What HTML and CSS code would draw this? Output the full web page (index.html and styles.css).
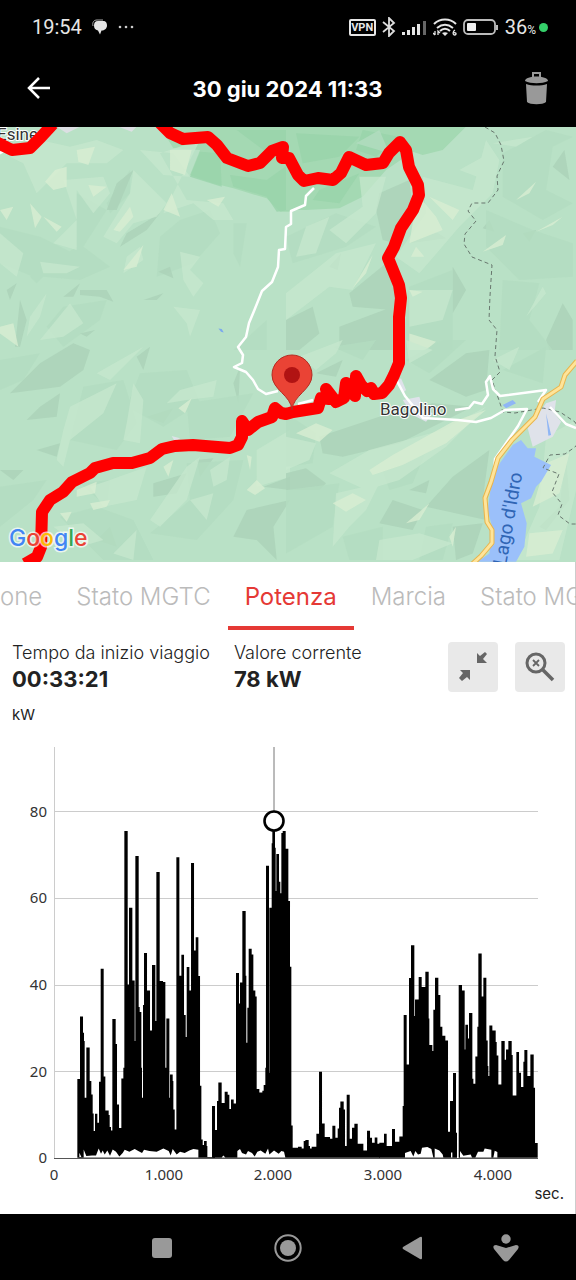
FILE: index.html
```html
<!DOCTYPE html>
<html lang="it">
<head>
    <meta charset="UTF-8">
    <meta name="viewport" content="width=device-width, initial-scale=1">
    <title>30 giu 2024 11:33</title>
    <link rel="stylesheet" href="styles.css">
</head>
<body>
    <div class="status">
        <span class="clock">19:54</span>
        <svg class="chat" width="16" height="16" viewBox="0 0 16 16"><path d="M6 2h5c3 0 4 2 4 4.500s-2 5-5 5H9.500l-1.500 4-2-4C3 11 2 9 2 6.500 2 4 3 2 6 2z" fill="#e6e6e6"/><path d="M1 7C0 3 2 1 5 1h6" stroke="#aaa" fill="none"/></svg>
        <svg width="18" height="4" viewBox="0 0 18 4" fill="#ccc"><circle cx="3" cy="2" r="1.3"/><circle cx="9" cy="2" r="1.3"/><circle cx="15" cy="2" r="1.3"/></svg>
        <div class="status-right">
            <span class="vpn">VPN</span>
            <svg width="14" height="20" viewBox="0 0 14 20" fill="none" stroke="#ddd" stroke-width="1.8"><path d="M1 5l11 9-5 5V1l5 5-11 9"/></svg>
            <svg width="25" height="17" viewBox="0 0 25 17" fill="#e6e6e6"><path d="M0 13h3v3H0zM5 11h3v5H5zM10 8h3v8h-3zM15 5h3v11h-3z"/><path d="M21 2h3v14h-3z" fill="#666"/></svg>
            <svg width="24" height="19" viewBox="0 0 24 19" fill="none" stroke="#e6e6e6" stroke-width="2"><path d="M1 6c6-6 16-6 22 0M4 10c5-4 11-4 16 0M7 13c3-3 7-3 10 0"/><path d="M9 15c2-1 4-1 6 0l-3 3z" fill="#e6e6e6" stroke="none"/><path d="M2 13v4M0 15l2 2M5 17v-4l2 2" stroke-width="1.3"/><path d="M22 12c-2 1-3 5 0 5 2-1 1-3-2-2" stroke-width="1.3"/></svg>
            <svg width="36" height="18" viewBox="0 0 36 18"><rect x="1" y="2" width="31" height="14" rx="4" fill="none" stroke="#bbb" stroke-width="1.8"/><rect x="4" y="5" width="9" height="8" rx="1" fill="#f0f0f0"/><path d="M34 7v5" stroke="#bbb" stroke-width="2"/></svg>
            <span class="battery">36<small>%</small></span>
            <i class="dot"></i>
        </div>
    </div>
    <div class="header">
        <button class="icon-btn" aria-label="Indietro">
            <svg width="26" height="26" viewBox="0 0 26 26" fill="none" stroke="#fff" stroke-width="2.5"><path d="M24 12H3M13 2L3 12l10 10"/></svg>
        </button>
        <h1>30 giu 2024 11:33</h1>
        <button class="icon-btn" aria-label="Elimina">
            <svg width="26" height="34" viewBox="0 0 26 34"><path d="M10 5V1h7v4" fill="none" stroke="#999" stroke-width="2"/><path d="M2 9c0-6 23-6 23 0-6 3-17 3-23 0z" fill="#999"/><path d="M3 12c6 2 15 2 21 0l-1 18c-3 3-16 3-19 0z" fill="#999"/></svg>
        </button>
    </div>

    <svg class="map" viewBox="0 127 576 435">
        <rect x="0" y="127" width="576" height="435" fill="#b9e1c6"/>
        <!-- terrain, one group for each quarter, 3 units per pixel -->
        <g transform="translate(0 120) scale(.3334)">
            <path class="t-wood" d="M480 20H870V275H840L800 235 700 205 640 190 570 165 600 90 520 85z"/>
            <path class="t-wood2" d="M690 165L800 180 870 130V270L830 275 800 230 700 200zM600 95L660 100 665 200 570 170zM710 30H870V70L790 90z"/>
            <path class="t-mid" d="M230 220L320 270 250 380 330 440 240 480 130 470 110 490 90 470 230 380zM540 300L630 270 660 340 580 430 470 470 480 350zM0 320L120 350 220 400 100 470 0 430zM190 560L320 540 300 600 190 680 140 620zM390 150L320 250 330 280 390 220zM700 310L740 310 720 440 700 400zM800 600L700 690 800 690z"/>
            <path class="t-dark" d="M400 150L350 190 320 270 350 270zM480 280L380 340 360 380 440 330zM190 530L240 490 220 530zM240 510H320L340 545 300 530 240 525zM50 490L20 510 30 540zM60 540L80 600 60 680 45 680zM510 440L475 455 520 475zM240 640L285 630 260 650zM430 540L490 520 470 540z"/>
            <path class="t-light" d="M30 110L120 60 210 80 290 60 370 90 320 130 200 130 110 220 70 130zM400 150L500 250 470 290 400 310 350 370 310 350 390 220zM230 390L160 370 230 300 190 180 310 170 330 220 280 280 230 210zM0 340L70 400 50 470 0 430zM120 425L240 440 200 460 130 460zM90 590L140 520 120 590 80 650zM210 550L250 610 190 650 120 660zM420 90L520 100 570 170 490 165zM600 60L480 100 560 240 670 250 700 300 640 300 580 250 490 280zM540 395L600 410 570 450 610 490 580 530 550 480zM420 380L430 420 370 460 380 410zM520 560L600 570 570 650 560 610z"/>
            <path class="t-pale" d="M230 90L285 80 265 135 235 125zM135 185L165 150 200 140 200 200 160 210zM510 90H575L555 165 510 150zM90 250L125 290 105 325zM340 330L390 260 400 290 360 335zM370 450L430 375 410 440zM130 290L185 320 170 335zM490 270L515 220 540 290zM0 620L40 610 55 680 0 640zM620 240L675 230 655 260zM265 195L320 200 280 230zM0 270L40 260 20 300z"/>
            <path d="M170 20H240L200 40zM355 20H410L395 35z" fill="#dcdfe3"/>
            <path d="M655 625l10 2 6 10-8-2z" fill="#7ba8ee"/>
        </g>
        <g transform="translate(286 120) scale(.3334)">
            <path class="t-wood" d="M0 20H540L470 90 410 105 380 95 300 150 230 230 160 265 60 270 0 270z"/>
            <path class="t-wood2" d="M30 40L220 50 160 110 50 130zM230 30L340 50 270 110 210 90zM100 210L220 160 160 250 80 240z"/>
            <path class="t-dark" d="M280 220L370 180 380 270 330 370 290 360 270 270zM190 520L300 430 340 520 320 570 200 560zM160 620L320 560V690H160zM370 370L440 330 480 355zM800 140L835 90 850 180zM710 340L750 330 730 365zM780 660L830 550 860 600V690H790zM590 325L610 300 625 335zM500 440L540 510 500 580zM0 600L80 560 100 640 40 690H0zM130 440L165 400 155 450z"/>
            <path class="t-mid" d="M600 270L740 330 860 370V470L700 480 600 380zM650 100L780 30 860 50 800 80 780 210 860 250 770 300 650 230zM370 500L500 450 500 690H350zM650 480L760 490 730 600 800 690H640zM0 350L150 280 270 320 180 380 20 430zM210 70L280 30 310 100z"/>
            <path class="t-light" d="M410 170L560 210 600 60 640 120 620 220 520 320 400 460 330 410 420 280zM220 170L300 170 270 280 180 370 130 330 230 260zM0 520L150 400 270 370 200 510 130 500 0 600zM370 510L500 510 470 600 370 620zM60 320L130 290 90 400 30 410zM520 150L610 100 600 180zM620 70L740 50 690 80zM720 590L770 500 780 520z"/>
            <path class="t-pale" d="M400 230L450 290 470 330 370 370 380 310zM430 230L520 270 500 300zM200 505L260 405 240 460zM590 395L660 345 650 375zM690 240L750 185 730 220zM375 410L390 380 415 410zM370 640L450 665 420 690H370zM370 510L410 515 380 530zM750 335L830 290 800 315z"/>
        </g>
        <g transform="translate(0 340) scale(.3334)">
            <path class="t-dark" d="M30 160L120 70 220 10 270 30 250 90 180 140zM120 200L180 160 170 230 80 240zM440 230L520 205 490 250zM0 390L70 390 40 420zM110 330L180 310 170 350zM460 430L560 400 530 460 460 470zM590 360L640 355 600 410zM790 440L870 410V450zM740 510L870 480 820 560 830 660 770 600 700 590zM290 600L330 560 350 620zM410 50L450 20 430 90zM700 130L720 80 715 190z"/>
            <path class="t-mid" d="M0 60L120 40 70 120 0 150zM250 140L370 120 410 250 350 330 210 300zM420 100L560 90 600 190 490 260 380 200zM560 190L760 160 690 290 570 300zM0 440L140 420 100 480 0 560zM560 370L730 360 700 480 590 600 450 580 570 480zM180 530L290 500 400 540 460 660H310zM240 430L330 420 320 500z"/>
            <path class="t-light" d="M190 270L210 200 350 130 310 220 210 300 190 380 170 360zM290 100L430 20 370 80 330 120zM380 250L400 130 430 180 420 310 370 300zM500 190L540 150 650 120 640 170 560 180zM330 420L440 380 410 480 310 500 270 440zM450 540L560 380 600 350 560 480 480 560zM160 560L250 550 310 600 240 620zM630 390L690 350 680 420 640 440zM770 330L870 270V410L770 440zM570 480L640 460 620 540zM340 640L410 570 400 660z"/>
            <path class="t-pale" d="M535 205L575 175 555 220zM270 490L330 480 320 500 280 510zM230 450L290 425 285 460 230 470zM740 450L770 420 795 445 765 465zM490 380L520 360 505 410zM180 520L215 515 200 545zM740 345L755 350 750 390z"/>
            <path d="M515 288L540 295 525 305z" fill="#dde3e8"/>
        </g>
        <g transform="translate(286 340) scale(.3334)">
            <path class="t-dark" d="M100 290L280 230 440 190 560 200 340 310 170 350 110 340zM430 120L540 40 610 30 600 150 540 170zM420 500L500 410 610 330 590 480 600 540zM280 550L320 480 410 510 380 570zM0 400L60 385 120 430 100 450 0 450zM500 560L590 550 560 640 510 660zM370 450L430 420 420 460zM840 350L850 480 780 570 760 560 820 500zM90 100L170 60 150 110z"/>
            <path class="t-mid" d="M0 220L90 280 80 370 0 380zM360 60L470 0H540L430 100zM0 450L160 430 140 560 0 640zM290 390L430 310 380 430 310 450zM170 590L290 560 290 660H190zM650 90L780 20 770 130zM420 560L500 550 470 660H400zM140 20L270 0 230 60z"/>
            <path class="t-light" d="M0 290L90 310 70 360 0 390zM130 400L250 330 470 270 600 200 480 320 340 420 240 450zM360 0L440 30 370 70zM40 50L170 0 150 40 90 90zM780 290L870 240V450L820 660H690L760 500zM150 460L280 430 240 510 190 560 140 620zM280 600L400 580 500 610 380 660H270zM620 60L700 20 670 90z"/>
            <path class="t-pale" d="M30 280L90 250 140 270 100 305zM250 390L320 345 500 245 600 210 480 310 350 375 260 405zM780 370L850 340 820 460 740 500zM140 490L200 460 240 480 180 515zM730 580L830 570 800 640 720 650zM360 550L430 490 400 540zM490 590L510 560 500 620z"/>
            <path d="M680 315L705 300 725 325 750 325 745 350 795 375 765 425 750 440 735 475 705 490 722 550 715 620 690 665H575L610 640 618 560 605 510 620 400z" fill="#9bc0fa"/>
            <path d="M725 265L780 190 810 180 805 220 825 245 800 290 740 320zM330 125L345 115 360 150 350 160zM350 180L400 170 410 205 440 220 420 245 380 225z" fill="#dfe2ea"/>
            <path d="M650 195L680 180 690 190 660 205zM780 220L795 285 787 287z" fill="#8fb6f5"/>
        </g>
        <path class="border" d="M485 127l10 6 6 12 3 16-7 15 1 14-10 13-16 0-4 8 8 10-11 13-1 10 8 13 20 8-2 31-1 24 8 10-2 26 5 16-8 8 11 32 12 1 28-5 17 4 15 10 8 15-8 10-10 7-15 1-7 13 16 6-7 18 10 12-4 11 12 9h20"/>
        <path class="road" d="M314 188l-8 8-1 9-14 6 0 13-5 3-1 22-6 1-1 17-6 15-10 9-8 20-5 12-3 14-8 10 5 8-1 8-8 4 12 5 7 8 5 9 8 5 12-3M397 381l8 15 18 22 35 2 18 2 15-4 14-8 22-1-9 17-23 33-1 12M455 410l14-2 5-6 8 2 6-9-2-13 4-6 3 13 7 7 46-6-8 12M550 407l16 17 10 4M-2 154l8-4M298 404l15-4"/>
        <path class="highway" d="M577 361l-12 14-4 12-18 12-8 18-23 23-14 18-7 24-6 16 2 24 5 8v13l-11 13-12 11"/>
        <path class="highway-fill" d="M577 361l-12 14-4 12-18 12-8 18-23 23-14 18-7 24-6 16 2 24 5 8v13l-11 13-12 11"/>
        <text class="place" x="-3" y="140">Esine</text>
        <path class="route" d="M-4 142L12 150 30 148 41 137 53 124M160 123L170 133 183 139 208 137 217 145 227 158 248 166 260 163 272 151 283 147 282 158 289 158 298 175 304 181 318 178 333 180 341 173 349 157 366 165 383 163 389 153 400 142 406 150 409 167 418 185 419 195 413 210 401 228 394 247 388 258 399 285 401 298 399 317 399 363 394 375 389 385 382 393 374 394 371 388 367 391 361 385 356 376 355 396 346 383 344 398 336 402 326 389 329 399 321 398 318 408 293 412 286 414 281 413 275 408 272 417 258 422 248 430 242 421 242 437 238 445 230 448 193 445 175 446 162 449 150 458 132 463 113 463 95 468 90 473 72 482 63 492 50 500 42 512 41 547 37 557 25 564"/>
        <path d="M292 410c-1-15-20-20-20-35a20 20 0 0 1 40 0c0 15-19 20-20 35z" fill="#ea4335" stroke="#b52b22"/>
        <circle cx="292" cy="375" r="8" fill="#b11313"/>
        <text class="place" x="380" y="415">Bagolino</text>
        <text class="lake" transform="translate(506 566) rotate(-80)">Lago d'Idro</text>
        <text class="google" x="9" y="546"><tspan fill="#4285f4">G</tspan><tspan fill="#ea4335">o</tspan><tspan fill="#fbbc05">o</tspan><tspan fill="#4285f4">g</tspan><tspan fill="#34a853">l</tspan><tspan fill="#ea4335">e</tspan></text>
    </svg>

    <div class="panel">
        <div class="tabs">
            <button>one</button>
            <button>Stato MGTC</button>
            <button class="selected">Potenza</button>
            <button>Marcia</button>
            <button>Stato MGTC</button>
        </div>
        <div class="info">
            <div class="item">
                <span>Tempo da inizio viaggio</span>
                <b>00:33:21</b>
            </div>
            <div class="item">
                <span>Valore corrente</span>
                <b>78 kW</b>
            </div>
            <div class="tools">
                <button aria-label="Riduci">
                    <svg width="50" height="50" viewBox="0 0 50 50" fill="#666"><path d="M29 11l3 3 5-4 2 2-4 5 4 4H29zM12 28h10v10l-3-3-5 4-3-3 4-5z"/></svg>
                </button>
                <button aria-label="Azzera zoom">
                    <svg width="50" height="50" viewBox="0 0 50 50" fill="none" stroke="#666"><circle cx="21" cy="21" r="9" stroke-width="3"/><path d="M28 28l10 10" stroke-width="3.6"/><path d="M18 18l6 6M24 18l-6 6" stroke-width="1.8"/></svg>
                </button>
            </div>
        </div>
        <div class="unit">kW</div>
        <svg class="chart" viewBox="0 728 576 457">
            <path class="grid" d="M54 810.500H538M54 897.500H538M54 984.500H538M54 1070.500H538M54.500 746V1157"/>
            <path d="M54 1157.500H538" stroke="#555"/>
            <g class="y-axis">
                <text x="47" y="816">80</text>
                <text x="47" y="902">60</text>
                <text x="47" y="989">40</text>
                <text x="47" y="1076">20</text>
                <text x="47" y="1162">0</text>
            </g>
            <g class="x-axis">
                <text x="54" y="1179">0</text>
                <text x="164" y="1179">1.000</text>
                <text x="273" y="1179">2.000</text>
                <text x="383" y="1179">3.000</text>
                <text x="493" y="1179">4.000</text>
            </g>
            <!-- samples, 3 units per pixel -->
            <g transform="translate(40 740) scale(.3334)">
                <path d="M112 1250V1014H120V826H129V875H132V900H134V1070H139V919H149V1020H154V1060H158V1117H161V1170H165V1118H172V1145H177V1022H182V683H191V1006H196V1108H206V1122H209V1158H213V1168H217V834H227V909H231V1090H237V1161H244V1012H250V980H253V270H263V730H267V500H277V718H284V900H286V345H296V798H299V813H304V980H306V1070H309V792H312V636H321V748H330V868H336V672H346V840H349V393H359V720H369V723H376V980H379V832H388V1070H390V1000H398V1020H400V1105H404V1165H409V349H418V704H424V641H432V822H437V888H440V678H448V748H453V366H462V628H467V589H475V705H480V1034H484V1195H488V1212H492V1200H500V1215H502V1248H516V1095H525V1250z"/>
                <path class="gap" d="M118 1248V1235L124 1248zM131 1249V1225L139 1245 156 1243 168 1243 176 1222 183 1238 188 1228 194 1240 202 1228 210 1244 218 1225 228 1232 238 1246 248 1236 254 1226 268 1232 284 1224 292 1228 306 1236 312 1226 328 1230 350 1232 370 1222 386 1230 392 1243 398 1224 410 1240 420 1232 434 1236 448 1228 460 1224 475 1226V1249z"/>
            </g>
            <g transform="translate(200 740) scale(.3334)">
                <path d="M37 1250V1095H45V1167H51V1080H55V1024H65V1086H74V1052H83V1061H88V1104H93V1075H101V1087H108V696H117V787H120V724H127V510H137V704H139V905H142V800H146V623H155V640H160V748H166V766H170V1044H178V1054H187V1049H191V1032H196V980H198V374H207V995H208V500H215V307H217V250H225V320H227V450H229V339H237V422H241V457H244V276H248V270H257V323H265V480H270V677H274V1153H278V1220H294V1217H305V1222H311V1200H316V1197H326V1215H330V1222H335V1217H349V1178H357V992H366V1147H374V1188H390V1193H397V1154H406V1190H413V1162H417V1100H421V1081H431V1105H435V1215H440V1061H449V1193H456V1160H463V1148H473V1208H490V1228H501V1169H510V1190H516V1205H524V1189H532V1208H540V1250z"/>
                <path class="gap" d="M65 1249l5-6 6 6zM112 1249V1230L120 1224 126 1236 138 1240 144 1230 156 1236 164 1246 172 1232 182 1228 196 1238 204 1222 208 1240 222 1228 236 1238 244 1230 252 1232 256 1249z"/>
            </g>
            <g transform="translate(370 740) scale(.3334)">
                <path d="M28 1250V1205H42V1178H50V1215H66V1164H75V1202H88V1186H98V1095H101V822H110V970H117V711H123V613H133V825H135V775H146V708H155V738H166V692H176V832H178V912H187V930H190V806H195V710H205V762H211V857H217V884H226V898H234V1172H240V1080H249V996H258V1175H261V1250H266V732H276V748H284V925H286V851H294V892H297V816H307V1013H310V1028H316V946H322V857H325V637H335V766H340V710H349V898H353V975H355V1005H358V853H367V868H377V903H380V943H385V1030H394V900H404V956H408V925H415V900H425V942H428V1063H439V933H447V995H453V1038H460V962H463V927H472V1005H481V940H491V1040H495V1206H503V1250z"/>
                <path class="gap" d="M105 1249V1236L122 1230 130 1246 136 1230 144 1240 152 1238 156 1220 172 1218 184 1224 190 1249zM194 1249V1222L208 1228 218 1240 220 1249zM243 1234h4v15h-4zM270 1249V1230L280 1244 302 1240 306 1249zM316 1249L324 1232 340 1232 344 1222 364 1226V1249zM370 1249l4-20 8 4v16z"/>
            </g>
            <path d="M274 746V820" stroke="#777"/>
            <circle cx="274" cy="820" r="9.500" fill="#fff" stroke="#000" stroke-width="2.600"/>
        </svg>
        <div class="unit right">sec.</div>
    </div>

    <div class="nav">
        <button aria-label="Recenti"><svg width="28" height="28" viewBox="0 0 28 28" fill="#999"><rect x="4" y="4" width="20" height="20" rx="3"/></svg></button>
        <button aria-label="Home"><svg width="28" height="28" viewBox="0 0 28 28" fill="#999"><circle cx="14" cy="14" r="12.700" fill="none" stroke="#999" stroke-width="2"/><circle cx="14" cy="14" r="8"/></svg></button>
        <button aria-label="Indietro"><svg width="28" height="28" viewBox="0 0 28 28" fill="#999"><path d="M5 13L22 3q2-1 2 1v20q0 2-2 1L5 15q-1-1 0-2z"/></svg></button>
        <button aria-label="Comandi"><svg width="28" height="28" viewBox="0 0 28 28" fill="#999"><circle cx="14" cy="5" r="4.700"/><path d="M4 11l10 3 10-3q4 0 2 4L17 26q-3 3-6 0L2 15q-2-4 2-4z"/></svg></button>
    </div>
</body>
</html>
```

FILE: styles.css
```css
*{
    margin: 0;
    padding: 0;
    box-sizing: border-box;
}
body{
    background: #000;
    font-family: Inter, "Noto Sans", sans-serif;
    color: #222;
}
button{
    border: 0;
    background: none;
    font: inherit;
    cursor: pointer;
}
svg{
    display: block;
}
.status{
    display: flex;
    align-items: center;
    height: 50px;
    padding: 4px 28px 0 32px;
    color: #e6e6e6;
    font-family: Roboto, sans-serif;
    font-size: 20px;
}
.chat{
    margin: 0 9px 0 10px;
}
.status-right{
    display: flex;
    align-items: center;
    gap: 6px;
    margin-left: auto;
}
.vpn{
    border: 2px solid #e6e6e6;
    border-radius: 2px;
    width: 27px;
    font-size: 11px;
    font-weight: bold;
    line-height: 13px;
    text-align: center;
}
.battery small{
    font-size: 12px;
}
.dot{
    width: 9px;
    height: 9px;
    border-radius: 50%;
    background: #35d06a;
    margin-left: -3px;
}
.header{
    display: flex;
    align-items: center;
    justify-content: space-between;
    height: 77px;
    padding: 0 27px 0 26px;
    color: #fff;
}
.header h1{
    font-size: 22px;
    line-height: 28px;
}
.map{
    width: 100%;
}
.t-light{
    fill: #c8e8cf;
    opacity: .7;
}
.t-pale{
    fill: #d8edd2;
    opacity: .8;
}
.t-mid{
    fill: #b3dcc0;
    opacity: .8;
}
.t-dark{
    fill: #abd2b8;
    opacity: .85;
}
.t-wood{
    fill: #a4d9b3;
}
.t-wood2{
    fill: #98d3aa;
    opacity: .8;
}
.border{
    fill: none;
    stroke: #68776e;
    stroke-dasharray: 4 3;
}
.road{
    fill: none;
    stroke: #fff;
    stroke-width: 2.5;
    stroke-linejoin: round;
}
.highway,.highway-fill{
    fill: none;
    stroke: #e9b44c;
    stroke-width: 5;
    stroke-linejoin: round;
}
.highway-fill{
    stroke: #fee49a;
    stroke-width: 3;
}
.route{
    fill: none;
    stroke: #f00;
    stroke-width: 12;
    stroke-linejoin: round;
}
.place{
    font: 17px Roboto, sans-serif;
    fill: #333;
    stroke: #fff;
    stroke-width: 2;
    paint-order: stroke;
}
.lake{
    font: 19px Roboto, sans-serif;
    fill: #2f65b5;
}
.google{
    font: 500 23px Inter, sans-serif;
    stroke: #fff;
    stroke-width: 3;
    stroke-opacity: .7;
    paint-order: stroke;
}
.panel{
    background: #fff;
    box-shadow: inset -1px 0 #ccc;
}
.tabs{
    display: flex;
    overflow: hidden;
}
.tabs button{
    flex: none;
    height: 68px;
    padding: 4px 17px 0;
    border-bottom: 4px solid transparent;
    color: #bbb;
    font-size: 24px;
    font-weight: 300;
}
.tabs button:first-child{
    padding-left: 0;
}
.tabs .selected{
    color: #e53935;
    border-color: #e53935;
    font-weight: 400;
}
.info{
    display: flex;
    gap: 24px;
    padding: 12px 11px 0 12px;
}
.item span,.item b{
    display: block;
}
.item span{
    font-size: 18px;
    font-weight: 300;
    line-height: 22px;
}
.item b{
    font-size: 22px;
    line-height: 30px;
}
.tools{
    display: flex;
    gap: 17px;
    margin-left: auto;
}
.tools button{
    width: 50px;
    height: 50px;
    border-radius: 4px;
    background: #e9e9e9;
}
.unit{
    padding: 0 12px 4px;
    font-size: 15px;
    line-height: 20px;
    margin-top: 11px;
}
.right{
    margin: 0;
    padding-bottom: 12px;
    line-height: 16px;
    text-align: right;
}
.chart{
    width: 100%;
}
.chart text{
    font: 15px "Noto Sans", sans-serif;
    fill: #333;
}
.y-axis text{
    text-anchor: end;
}
.x-axis text{
    text-anchor: middle;
}
.grid{
    stroke: #ccc;
}
.gap{
    fill: #fff;
}
.nav{
    display: grid;
    grid-template-columns: 126fr 126fr 122fr 66fr;
    align-items: center;
    height: 67px;
    padding: 0 37px 0 99px;
}
.nav svg{
    margin: 0 auto;
}
```
